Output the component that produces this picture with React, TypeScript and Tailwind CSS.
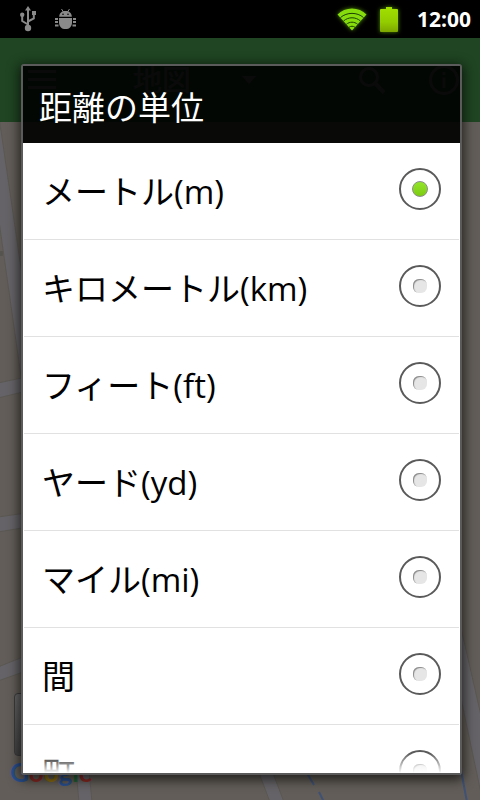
import { useState } from "react";

const units = [
    { id: "m", label: "メートル(m)" },
    { id: "km", label: "キロメートル(km)" },
    { id: "ft", label: "フィート(ft)" },
    { id: "yd", label: "ヤード(yd)" },
    { id: "mi", label: "マイル(mi)" },
    { id: "ken", label: "間" },
    { id: "cho", label: "町" },
];

function StatusBar() {
    return (
        <header className="flex h-[38px] shrink-0 items-center bg-black pl-5 pr-[9px]">
            {/* usb */}
            <svg className="h-[26px] w-4" viewBox="0 0 16 26" fill="none" stroke="#8a8a8a" strokeWidth="2">
                <path d="M8 22V3M8 18.5L2.2 15V9.5M8 15.5L13.8 12.5V8" />
                <path d="M8 0l3 4.500H5z" fill="#8a8a8a" stroke="none" />
                <circle cx="8" cy="22" r="3.200" fill="#8a8a8a" stroke="none" />
                <circle cx="2.2" cy="8.8" r="2.200" fill="#8a8a8a" stroke="none" />
                <path d="M12 5h4v4h-4z" fill="#8a8a8a" stroke="none" />
            </svg>
            {/* usb debugging */}
            <svg className="ml-[19px] h-5 w-[21px]" viewBox="0 0 21 20" fill="#8a8a8a">
                <path d="M4.200 7.800C4.200 4 7 2 10.500 2s6.300 2 6.300 5.800z" />
                <path d="M4 9h13v5q0 2-1.500 4-1.500 2-3.500 2H9q-2 0-3.500-2Q4 16 4 14z" />
                <path d="M6.500 0l2 3M14.500 0l-2 3" stroke="#8a8a8a" strokeWidth="1" />
                <path d="M0 9h3v2H0zM0 12h3v2H0zM0 15.500h3.500v2H0zM18 9h3v2h-3zM18 12h3v2h-3zM17.500 15.500H21v2h-3.500z" />
                <circle cx="8" cy="5.300" r="0.800" fill="#000" />
                <circle cx="13" cy="5.300" r="0.800" fill="#000" />
            </svg>
            <div className="ml-auto flex items-center">
                <svg className="h-[23px] w-[30px] drop-shadow-[0_0_2px_#4f8a00]" viewBox="0 0 30 23">
                    <path d="M0.500 6.500C8-1.500 22-1.500 29.500 6.500L15 22.500z" fill="#86dc0c" />
                    <path d="M3.500 9.500c6.500-5.500 16.500-5.500 23 0M6.500 13c5-4.300 12-4.300 17 0M9.300 16.300c3.400-2.800 8-2.800 11.400 0M12 19.300c1.800-1.400 4.200-1.400 6 0" fill="none" stroke="#1d4200" strokeWidth="1" />
                </svg>
                <svg className="ml-[13px] h-[25px] w-[18px] drop-shadow-[0_0_2px_#4f8a00]" viewBox="0 0 18 25">
                    <defs>
                        <linearGradient id="battery" x1="0" y1="0" x2="0" y2="1">
                            <stop offset="0" stopColor="#a2e000" />
                            <stop offset="0.600" stopColor="#93cc00" />
                            <stop offset="1" stopColor="#7da600" />
                        </linearGradient>
                    </defs>
                    <path d="M6 0h6v2h5q1 0 1 1v21q0 1-1 1H1q-1 0-1-1V3q0-1 1-1h5z" fill="url(#battery)" />
                </svg>
                <span className="ml-[19px] text-[21px] leading-7 font-bold text-white">12:00</span>
            </div>
        </header>
    );
}

function AppBar() {
    return (
        <div className="flex h-[84px] shrink-0 items-center bg-[#1f4522] pl-7 pr-[21px] text-[#666]">
            <svg className="h-5 w-7" viewBox="0 0 28 20" fill="currentColor">
                <path d="M0 0h28v3H0zM0 8h28v3H0zM0 16h28v3H0z" />
            </svg>
            <span className="ml-[77px] text-[29px] leading-9 font-medium">地図</span>
            <svg className="ml-[51px] h-2 w-[14px]" viewBox="0 0 14 8" fill="currentColor">
                <path d="M0 0h14L7 8z" />
            </svg>
            <svg className="ml-auto h-[27px] w-[26px]" viewBox="0 0 26 27" fill="none" stroke="currentColor" strokeWidth="3">
                <circle cx="10" cy="10" r="8.500" />
                <path d="M16 16l9 9.500" strokeWidth="4" />
            </svg>
            <svg className="ml-[44px] h-[30px] w-[30px]" viewBox="0 0 30 30" fill="none" stroke="currentColor" strokeWidth="3">
                <circle cx="15" cy="15" r="13.500" />
                <path d="M15 7v3M15 12.500V23" />
            </svg>
        </div>
    );
}

function MapView() {
    return (
        <div className="relative flex-1 overflow-hidden bg-[#625d58]">
            <svg className="h-full w-full" viewBox="0 122 480 678" preserveAspectRatio="none">
                <g fill="#656367" stroke="#5b5853" strokeWidth="1">
                    <path d="M-2 110L30 330V440L-2 214z" />
                    <path d="M-2 383L40 374V388L-2 398z" />
                    <path d="M-2 517L40 511V525L-2 532z" />
                    <path d="M-2 667L40 650V666L-2 681z" />
                    <path d="M456 606L482 720V798L456 675z" />
                    <path d="M75 760H88L92 802H79z" />
                    <path d="M254 760H268L284 802H270z" />
                </g>
                <path d="M0 251h3v5H0z" fill="#56544f" />
                <path d="M304 768L314 785M319 792L324 802M461 770L467 802" fill="none" stroke="#3f5275" strokeWidth="2" />
            </svg>
            <div className="absolute bottom-11 left-[14px] h-[63px] w-16 rounded-sm border border-[#3c3c3c] bg-linear-to-b from-[#666] to-[#444]" />
            <div className="absolute bottom-[10px] left-[10px] font-[Lato,sans-serif] text-[26px] leading-9 font-bold">
                <span className="text-[#29508f]">G</span>
                <span className="text-[#8d2a25]">o</span>
                <span className="text-[#90700d]">o</span>
                <span className="text-[#29508f]">g</span>
                <span className="text-[#1d6433]">l</span>
                <span className="text-[#8d2a25]">e</span>
            </div>
        </div>
    );
}

function App() {
    const [unit, setUnit] = useState("m");

    return (
        <div className="relative flex h-screen flex-col overflow-hidden bg-black font-['Open_Sans','Noto_Sans_CJK_JP',sans-serif]">
            <StatusBar />
            <AppBar />
            <MapView />

            {/* dialog over the map screen */}
            <div className="absolute inset-x-0 top-[38px] bottom-0 flex pt-[26px] pr-[18px] pb-[25px] pl-[21px]">
                <div role="dialog" aria-labelledby="dialog-title" className="flex min-w-0 flex-1 flex-col rounded-[3px] border-2 border-[#5b5b5b] shadow-[0_3px_12px_2px_rgba(0,0,0,0.65)]">
                    <h1 id="dialog-title" className="shrink-0 bg-black/90 pt-[18px] pb-[11px] pl-4 text-[33px] leading-[48px] text-white">
                        距離の単位
                    </h1>
                    <div className="relative flex min-h-0 flex-1 flex-col bg-white">
                        <ul className="flex-1 overflow-y-auto px-px [scrollbar-width:none]">
                            {units.map((item) => (
                                <li key={item.id} className="border-b border-[#e1e1e1]">
                                    <label className="flex h-24 items-center justify-between px-[18px] pb-1">
                                        <span className="pt-[5px] text-[33px] leading-[48px] text-black">{item.label}</span>
                                        <input
                                            type="radio"
                                            name="unit"
                                            checked={unit === item.id}
                                            onChange={() => setUnit(item.id)}
                                            className="grid h-[42px] w-[42px] shrink-0 appearance-none place-items-center rounded-full border-2 border-[#5a5a5a] bg-white before:h-[14px] before:w-[14px] before:rounded-md before:bg-[#e6e6e6] before:shadow-[inset_1px_1px_1px_#888] before:content-[''] checked:before:h-4 checked:before:w-4 checked:before:rounded-full checked:before:border checked:before:border-[#8b8f86] checked:before:bg-linear-to-b checked:before:from-[#93e52b] checked:before:to-[#7dcc10] checked:before:shadow-none"
                                        />
                                    </label>
                                </li>
                            ))}
                        </ul>
                        <div className="pointer-events-none absolute inset-x-0 bottom-0 h-5 bg-linear-to-b from-white/0 to-white" />
                    </div>
                </div>
            </div>
        </div>
    );
}

export default App;
